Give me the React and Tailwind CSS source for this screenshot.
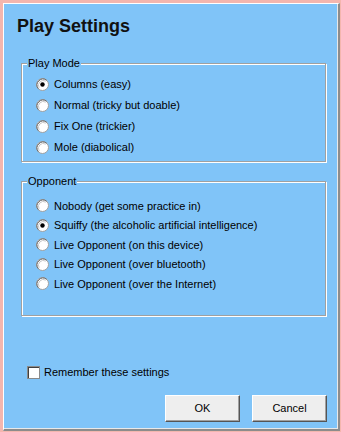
import React, { useState } from 'react';

const MODES = ['Columns (easy)', 'Normal (tricky but doable)', 'Fix One (trickier)', 'Mole (diabolical)'];
const OPPONENTS = [
  'Nobody (get some practice in)',
  'Squiffy (the alcoholic artificial intelligence)',
  'Live Opponent (on this device)',
  'Live Opponent (over bluetooth)',
  'Live Opponent (over the Internet)',
];

const FONT = { fontFamily: '"Liberation Sans", Arial, sans-serif' };

function Radio({ checked }) {
  return (
    <svg width="13" height="13" viewBox="0 0 13 13" className="shrink-0">
      <circle cx="6.5" cy="6.5" r="6" fill="#fff" stroke="#a0a0a0" />
      <path d="M2.3 10.7 A6 6 0 0 1 10.7 2.3" fill="none" stroke="#696969" strokeWidth="1" />
      <path d="M3.2 9.8 A4.8 4.8 0 0 1 9.8 3.2" fill="none" stroke="#c8c8c8" strokeWidth="1" />
      {checked && <circle cx="6.5" cy="6.5" r="2.2" fill="#000" />}
    </svg>
  );
}

// etched group box, legend sits on the top line
function Group({ label, className, children }) {
  return (
    <div className={`ml-[17px] w-[305px] border border-[#a0a0a0] shadow-[1px_1px_0_#fff,inset_1px_1px_0_#fff] ${className}`}>
      <div className="-mt-[7px] ml-[5px] w-fit bg-[#80c4f8] px-[1px] text-[11px] leading-[13px] text-black">{label}</div>
      {children}
    </div>
  );
}

export default function App() {
  const [mode, setMode] = useState(0);
  const [opp, setOpp] = useState(1);
  const [remember, setRemember] = useState(false);

  return (
    <div className="w-[341px] h-[432px] bg-[#f4b6ae] pl-[3px] pt-[3px] overflow-hidden" style={FONT}>
      <div className="w-[337px] h-[428px] bg-[#80c4f8] border-l border-t border-white border-r-2 border-b-2 border-r-[#8c8c8c] border-b-[#8c8c8c] shadow-[inset_-1px_-1px_0_#e8e8e8]">
        <h1 className="pl-[13px] pt-[12px] h-[59px] text-[18px] leading-[21px] font-bold text-[#111]">Play Settings</h1>

        <Group label="Play Mode" className="h-[99px]">
          <div className="pt-[4px]">
            {MODES.map((m, i) => (
              <div key={m} onClick={() => setMode(i)} className="flex items-center h-[21px] pl-[14px] gap-[5px] text-[11px] text-black cursor-default">
                <Radio checked={mode === i} />
                <span>{m}</span>
              </div>
            ))}
          </div>
        </Group>

        <Group label="Opponent" className="mt-[19px] h-[135px]">
          <div className="pt-[8px]">
            {OPPONENTS.map((o, i) => (
              <div key={o} onClick={() => setOpp(i)} className="flex items-center h-[19.5px] pl-[14px] gap-[5px] text-[11px] text-black cursor-default">
                <Radio checked={opp === i} />
                <span>{o}</span>
              </div>
            ))}
          </div>
        </Group>

        <div onClick={() => setRemember(r => !r)} className="mt-[50px] ml-[23px] flex items-center gap-[4px] h-[13px] text-[11px] text-black cursor-default">
          <div className="w-[13px] h-[13px] bg-white border border-[#8a8a8a] shadow-[inset_1px_1px_0_#404040] flex items-center justify-center">
            {remember && <span className="text-[10px] leading-none">✓</span>}
          </div>
          <span>Remember these settings</span>
        </div>

        <div className="mt-[16px] flex justify-end gap-[12px] pr-[11px]">
          <button className="w-[75px] h-[27px] bg-[#eeeeee] border-l border-t border-white border-r border-b border-r-[#555] border-b-[#555] shadow-[inset_-1px_-1px_0_#a0a0a0] text-[11px] text-black">OK</button>
          <button className="w-[75px] h-[27px] bg-[#eeeeee] border-l border-t border-white border-r border-b border-r-[#555] border-b-[#555] shadow-[inset_-1px_-1px_0_#a0a0a0] text-[11px] text-black">Cancel</button>
        </div>
      </div>
    </div>
  );
}
